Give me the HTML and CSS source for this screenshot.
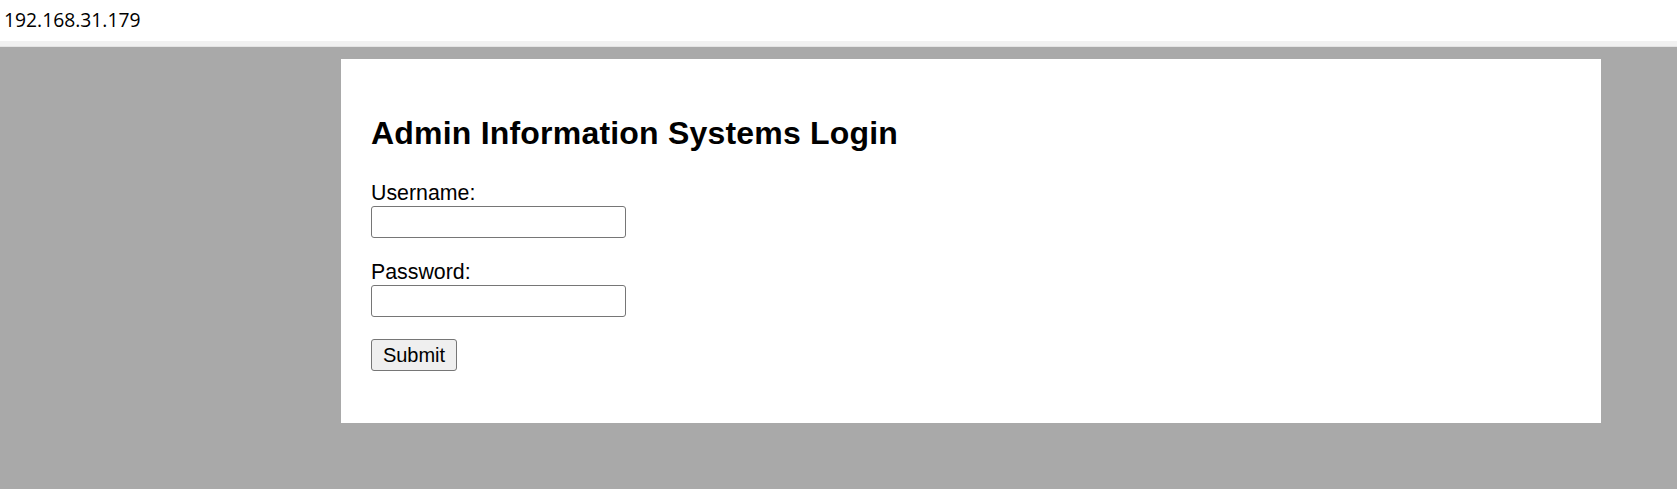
FILE: index.html
```html
<!DOCTYPE html>
<html lang="en">
<head>
<meta charset="utf-8">
<title>Admin Information Systems Login</title>
<link rel="stylesheet" href="styles.css">
</head>
<body>
<div class="urlbar"><span class="url">192.168.31.179</span></div>
<div class="divider"></div>
<main class="page">
  <div class="card">
    <h1 class="title">Admin Information Systems Login</h1>
    <form class="form">
      <label class="field-label" for="username">Username:</label>
      <input class="field-input" id="username" type="text">
      <label class="field-label" for="password">Password:</label>
      <input class="field-input" id="password" type="password">
      <button class="submit" type="button">Submit</button>
    </form>
  </div>
</main>
</body>
</html>
```
FILE: styles.css
```css
html, body {
  margin: 0;
  height: 100%;
}
body {
  background: #a9a9a9;
  display: flex;
  flex-direction: column;
  font-family: "Liberation Sans", Arial, sans-serif;
  color: #000;
}
.urlbar {
  height: 41px;
  flex: none;
  box-sizing: border-box;
  background: #fff;
  display: flex;
  align-items: center;
  padding: 0 0 3px 4px;
  font-family: "Open Sans", sans-serif;
  font-size: 19.3px;
  color: #000;
}
.divider {
  height: 6px;
  flex: none;
  box-sizing: border-box;
  background: #f1f1f1;
  border-bottom: 1px solid #e4e4e4;
}
.page {
  flex: 1;
  padding: 12px 0 0 341px;
}
.card {
  width: 1260px;
  height: 364px;
  box-sizing: border-box;
  background: #fff;
  padding: 56px 30px 0;
}
.title {
  margin: 0;
  font-size: 32px;
  line-height: 37px;
  font-weight: bold;
  letter-spacing: 0.2px;
}
.form {
  display: flex;
  flex-direction: column;
  align-items: flex-start;
  margin: 29px 0 0;
}
.field-label {
  font-size: 21.33px;
  line-height: 24px;
  margin-bottom: 1px;
}
.field-input {
  width: 255px;
  height: 32px;
  box-sizing: border-box;
  border: 1px solid #767676;
  border-radius: 3px;
  margin: 0 0 22px;
  padding: 1px 2px;
  font-size: 20px;
  font-family: inherit;
  background: #fff;
}
.submit {
  width: 86px;
  height: 32px;
  box-sizing: border-box;
  font-size: 20px;
  font-family: inherit;
  background: #efefef;
  border: 1px solid #767676;
  border-radius: 3px;
  padding: 0;
  color: #000;
}
```
